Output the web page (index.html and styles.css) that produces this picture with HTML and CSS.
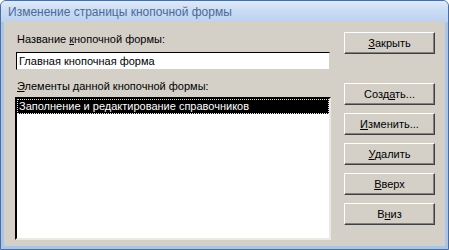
FILE: index.html
```html
<!DOCTYPE html>
<html lang="ru">
<head>
<meta charset="utf-8">
<title>Изменение страницы кнопочной формы</title>
<link rel="stylesheet" href="styles.css">
</head>
<body>
<div class="window">
  <div class="titlebar">Изменение страницы кнопочной формы</div>
  <div class="client">
    <div class="left">
      <div class="label">Название <u>к</u>нопочной формы:</div>
      <div class="textbox">Главная кнопочная форма</div>
      <div class="label label-list"><u>Э</u>лементы данной кнопочной формы:</div>
      <div class="listbox">
        <div class="row selected"><span class="focus">Заполнение и редактирование справочников</span></div>
      </div>
    </div>
    <div class="buttons">
      <div class="btn btn-close"><u>З</u>акрыть</div>
      <div class="btn btn-first">Созд<u>а</u>ть...</div>
      <div class="btn"><u>И</u>зменить...</div>
      <div class="btn"><u>У</u>далить</div>
      <div class="btn"><u>В</u>верх</div>
      <div class="btn">В<u>н</u>из</div>
    </div>
  </div>
</div>
</body>
</html>
```
FILE: styles.css
```css
html, body {
  margin: 0;
  padding: 0;
  background: #ffffff;
}
.window {
  width: 449px;
  height: 250px;
  box-sizing: border-box;
  border: 1px solid #4b6e9e;
  border-radius: 6px 6px 0 0;
  background: #a9c5ea;
  display: flex;
  flex-direction: column;
  overflow: hidden;
  font-family: "Liberation Sans", Arial, sans-serif;
  font-size: 11px;
  color: #000;
}
.titlebar {
  height: 21px;
  flex: none;
  box-sizing: border-box;
  padding: 3px 0 0 7px;
  background: linear-gradient(#dfeafa 0%, #cadcf4 45%, #bcd2f0 100%);
  color: #4c6a98;
  font-family: "Liberation Sans", Arial, sans-serif;
  font-size: 12px;
  line-height: 16px;
}
.client {
  flex: 1;
  margin: 0 3px 3px 3px;
  background: #d4d0c8;
  display: flex;
  padding: 10px 11px 0 11px;
  gap: 13px;
}
.left {
  width: 316px;
  display: flex;
  flex-direction: column;
}
.label {
  margin-top: 1px;
  padding-left: 2px;
  line-height: 13px;
}
.label-list {
  margin-top: 10px;
}
.textbox {
  margin: 6px 0 0 1px;
  width: 314px;
  height: 18px;
  box-sizing: border-box;
  background: #fff;
  border: 1px solid #000;
  border-right-color: #d4d0c8;
  border-bottom-color: #d4d0c8;
  padding: 2px 2px 0 2px;
  line-height: 13px;
}
.listbox {
  margin-top: 4px;
  width: 316px;
  height: 143px;
  box-sizing: border-box;
  background: #fff;
  border-top: 2px solid #000;
  border-left: 2px solid #000;
  border-right: 2px solid #ece9e2;
  border-bottom: 2px solid #ece9e2;
  box-shadow: inset -1px -1px 0 #fff;
}
.row {
  height: 15px;
  box-sizing: border-box;
  line-height: 13px;
}
.row.selected {
  background: #000;
  color: #fff;
}
.focus {
  display: block;
  height: 15px;
  box-sizing: border-box;
  border: 1px dotted #f5e9a9;
  padding-left: 1px;
}
.buttons {
  display: flex;
  flex-direction: column;
  gap: 8px;
}
.btn {
  width: 91px;
  height: 22px;
  box-sizing: border-box;
  background: #d4d0c8;
  border-top: 1px solid #fff;
  border-left: 1px solid #fff;
  border-right: 1px solid #404040;
  border-bottom: 1px solid #404040;
  box-shadow: inset -1px -1px 0 #808080;
  text-align: center;
  line-height: 20px;
}
.btn-first {
  margin-top: 21px;
}
u {
  text-decoration: underline;
  text-underline-offset: 1px;
}
```
